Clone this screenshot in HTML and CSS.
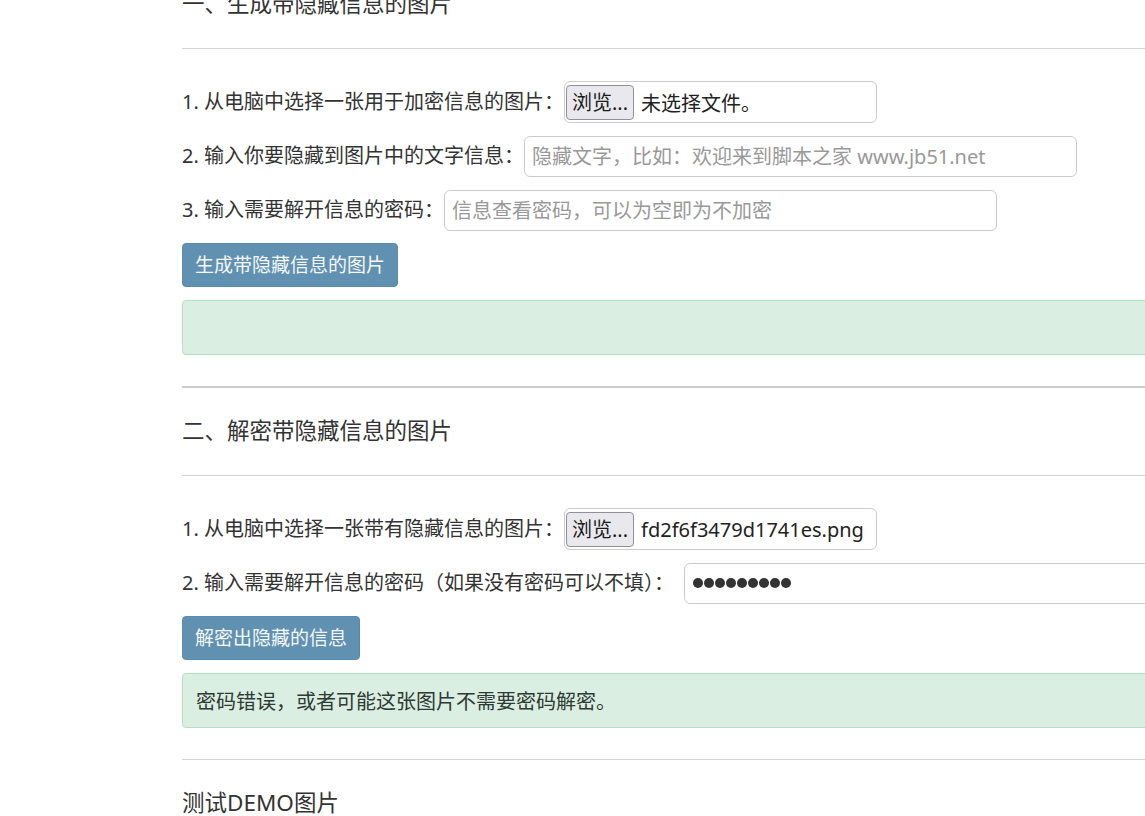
FILE: index.html
```html
<!DOCTYPE html>
<html lang="zh-CN">
<head>
<meta charset="utf-8">
<title>图片隐藏信息</title>
<link rel="stylesheet" href="styles.css">
</head>
<body>
<div class="page">
  <h3 class="title first">一、生成带隐藏信息的图片</h3>
  <hr class="rule">
  <div class="form-row">
    <label class="lbl">1. 从电脑中选择一张用于加密信息的图片：</label>
    <div class="file"><span class="file-btn">浏览...</span><span class="file-name">未选择文件。</span></div>
  </div>
  <div class="form-row">
    <label class="lbl">2. 输入你要隐藏到图片中的文字信息：</label>
    <input class="text-input" type="text" placeholder="隐藏文字，比如：欢迎来到脚本之家 www.jb51.net">
  </div>
  <div class="form-row">
    <label class="lbl">3. 输入需要解开信息的密码：</label>
    <input class="text-input" type="text" placeholder="信息查看密码，可以为空即为不加密">
  </div>
  <button class="btn" type="button">生成带隐藏信息的图片</button>
  <div class="alert"></div>
  <hr class="rule thick">

  <h3 class="title">二、解密带隐藏信息的图片</h3>
  <hr class="rule">
  <div class="form-row">
    <label class="lbl">1. 从电脑中选择一张带有隐藏信息的图片：</label>
    <div class="file"><span class="file-btn">浏览...</span><span class="file-name">fd2f6f3479d1741es.png</span></div>
  </div>
  <div class="form-row">
    <label class="lbl lbl-wide">2. 输入需要解开信息的密码（如果没有密码可以不填）：</label>
    <div class="text-input pw" aria-label="密码">
      <span class="dot"></span><span class="dot"></span><span class="dot"></span><span class="dot"></span><span class="dot"></span><span class="dot"></span><span class="dot"></span><span class="dot"></span><span class="dot"></span>
    </div>
  </div>
  <button class="btn" type="button">解密出隐藏的信息</button>
  <div class="alert">密码错误，或者可能这张图片不需要密码解密。</div>
  <hr class="rule end">

  <h3 class="title">测试DEMO图片</h3>
</div>
</body>
</html>
```
FILE: styles.css
```css
html, body {
  margin: 0;
  padding: 0;
  background: #fff;
  overflow: hidden;
}
body {
  font-family: "Noto Sans", "Noto Sans CJK SC", sans-serif;
  font-size: 20px;
  color: #333;
}
.page {
  margin-left: 182px;
  width: 1000px;
  display: flex;
  flex-direction: column;
  align-items: flex-start;
}
.title {
  margin: 30px 0 0;
  font-size: 22.5px;
  line-height: 26px;
  font-weight: normal;
  color: #333;
}
.title.first {
  margin-top: -9px;
}
.rule {
  align-self: stretch;
  margin: 31px 0 32px;
  border: 0;
  border-top: 1px solid #d3d3d3;
  height: 0;
}
.rule.thick {
  border-top: 2px solid #cccccc;
  margin-bottom: 0;
}
.rule.end {
  margin-bottom: 0;
}
.form-row {
  display: flex;
  align-items: center;
  height: 42px;
  margin-bottom: 12px;
}
.lbl {
  line-height: 26px;
  white-space: nowrap;
}
.lbl-wide {
  margin-right: 10px;
}
.file {
  box-sizing: border-box;
  width: 313px;
  height: 42px;
  border: 1px solid #cccccc;
  border-radius: 6px;
  display: flex;
  align-items: center;
  padding-left: 1px;
}
.file-btn {
  box-sizing: border-box;
  height: 35px;
  padding: 0 5px;
  border: 1px solid #8f8f9d;
  border-radius: 4px;
  background: #e9e9ed;
  color: #1b1b1b;
  line-height: 33px;
  white-space: nowrap;
}
.file-name {
  margin-left: 7px;
  color: #222;
  white-space: nowrap;
}
.text-input {
  box-sizing: border-box;
  width: 553px;
  height: 41px;
  border: 1px solid #cccccc;
  border-radius: 6px;
  padding: 0 7px;
  font-family: inherit;
  font-size: 20px;
  color: #333;
  background: #fff;
  outline: none;
}
.text-input::placeholder {
  color: #999;
}
.pw {
  display: flex;
  align-items: center;
  gap: 1px;
  padding-left: 8px;
}
.dot {
  width: 10px;
  height: 10px;
  border-radius: 50%;
  background: #333;
}
.btn {
  box-sizing: border-box;
  height: 44px;
  padding: 0 12px;
  border: 1px solid #5b8bab;
  border-radius: 4px;
  background: #6191b1;
  color: #f4f7fa;
  font-family: inherit;
  font-size: 19px;
  line-height: 42px;
  cursor: pointer;
}
.alert {
  box-sizing: border-box;
  align-self: stretch;
  margin-top: 13px;
  height: 55px;
  padding: 0 13px;
  border: 1px solid #b5dfc6;
  border-radius: 4px;
  background: #dbeee2;
  color: #2e3a33;
  display: flex;
  align-items: center;
}
```
